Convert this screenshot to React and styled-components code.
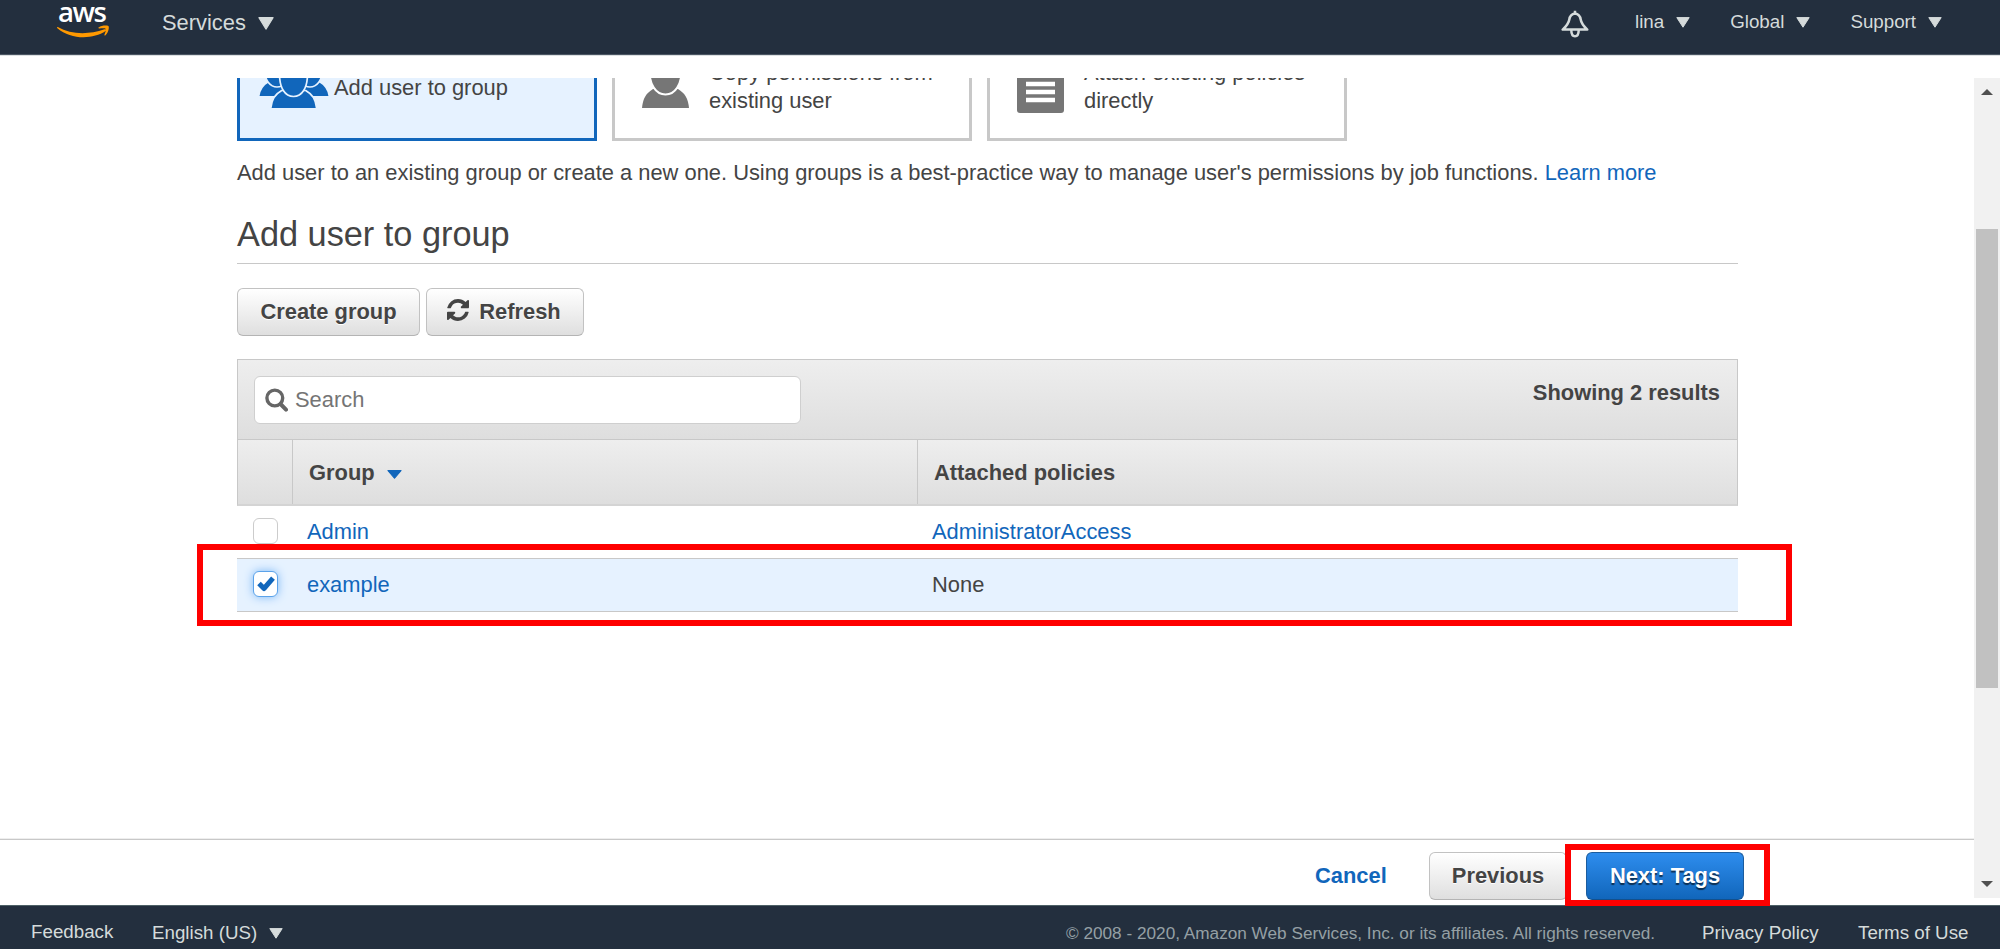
import React from "react";
import styled, { createGlobalStyle } from "styled-components";

const Global = createGlobalStyle`
  *, *::before, *::after { box-sizing: border-box; }
  body { margin: 0; background: #fff; color: #444; overflow: hidden;
    font: 21.88px/30px "Liberation Sans", Arial, sans-serif; }
  button, input { font: inherit; color: inherit; }
`;

const Page = styled.div`
  position: relative;
  width: 2000px;
  height: 949px;
  display: flex;
  flex-direction: column;
  overflow: hidden;
`;

const TopBar = styled.header`
  height: 55px;
  flex: none;
  display: flex;
  align-items: flex-start;
  background: #232f3e;
  color: #d5dbdb;
  border-bottom: 1px solid #4a5562;
  box-shadow: 0 1px 0 #dcdfe1;
`;

const Logo = styled.a`
  width: 54px;
  height: 40px;
  margin: 0 51px 0 57px;
  display: flex;
  flex-direction: column;
  svg { display: block; margin-top: -1px; }
`;

const LogoText = styled.span`
  padding-left: 1px;
  font: 600 27.5px/24px "Open Sans", "Noto Sans", sans-serif;
  letter-spacing: -1.4px;
  color: #fff;
`;

const MenuItem = styled.a`
  display: flex;
  align-items: center;
  gap: 12px;
  height: 30px;
  margin-top: ${(p) => p.$top || 7}px;
  margin-left: ${(p) => p.$left || 0}px;
  font-size: ${(p) => p.$size || 18.75}px;
  white-space: nowrap;
`;

const Spacer = styled.div`
  flex: 1;
`;

const BellBox = styled.div`
  width: 28px;
  height: 28px;
  margin: 10px 46px 0 0;
  svg { display: block; }
`;

const RightMenus = styled.nav`
  display: flex;
  width: 365px;
`;

const Body = styled.div`
  flex: 1;
  display: flex;
  padding-top: 23px;
  min-height: 0;
`;

const Column = styled.div`
  flex: 1;
  display: flex;
  flex-direction: column;
  min-width: 0;
`;

const ScrollArea = styled.main`
  height: 762px;
  overflow: hidden;
  padding: 0 236px 0 237px;
`;

const Cards = styled.div`
  display: flex;
  gap: 15px;
  height: 63px;
  align-items: flex-end;
`;

const Card = styled.div`
  width: 360px;
  height: 124px;
  flex: none;
  display: flex;
  align-items: flex-start;
  border: 3px solid ${(p) => (p.$active ? "#1166bb" : "#c8c8c8")};
  background: ${(p) => (p.$active ? "#e6f2ff" : "#fff")};
`;

const CardIcon = styled.div`
  flex: none;
  width: ${(p) => p.$width}px;
  padding-left: ${(p) => p.$left}px;
  padding-top: 42px;
  svg { display: block; }
`;

const CardText = styled.div`
  padding-top: ${(p) => p.$top}px;
  line-height: 28px;
  width: 240px;
`;

const Intro = styled.p`
  margin: 17px 0 0;
  white-space: nowrap;
`;

const Link = styled.a`
  color: #1166bb;
`;

const Title = styled.h2`
  margin: 16px 0 0;
  height: 60px;
  font-size: 34.3px;
  font-weight: 400;
  line-height: 60px;
  border-bottom: 1px solid #c8c8c8;
`;

const Actions = styled.div`
  display: flex;
  gap: 6px;
  margin-top: 24px;
`;

const Button = styled.button`
  height: 48px;
  width: ${(p) => p.$width}px;
  flex: none;
  display: flex;
  align-items: center;
  justify-content: center;
  gap: 10px;
  padding: 0;
  border: 1px solid ${(p) => (p.$primary ? "#1b5c9e" : "#c2c2c2")};
  border-bottom-color: ${(p) => (p.$primary ? "#12508e" : "#b4b4b4")};
  border-radius: 6px;
  background: ${(p) =>
    p.$primary ? "linear-gradient(#2e8dee, #1166bb)" : "linear-gradient(#fff, #dfdfdf)"};
  color: ${(p) => (p.$primary ? "#fff" : "#444")};
  font-weight: 700;
  text-shadow: ${(p) => (p.$primary ? "0 2px 1px rgba(0,0,0,.6)" : "0 1px 0 #fff")};
  svg { margin: 0 0 4px -2px; }
`;

const Table = styled.section`
  margin-top: 23px;
`;

const Tools = styled.div`
  height: 81px;
  display: flex;
  justify-content: space-between;
  padding: 16px 17px 0 16px;
  border: 1px solid #c8c8c8;
  background: linear-gradient(#eee, #dedede);
`;

const SearchBox = styled.label`
  display: flex;
  align-items: center;
  width: 547px;
  height: 48px;
  padding: 0 0 1px 10px;
  gap: 7px;
  background: #fff;
  border: 1px solid #cfcfcf;
  border-radius: 6px;
  input { border: 0; outline: 0; padding: 0; width: 440px; background: none; }
  input::placeholder { color: #757575; opacity: 1; }
`;

const Results = styled.strong`
  line-height: 34px;
`;

const HeadRow = styled.div`
  display: grid;
  grid-template-columns: 54px 625px 1fr;
  height: 66px;
  border: 1px solid #c8c8c8;
  border-top: 0;
  border-bottom: 2px solid #d4d4d4;
  background: linear-gradient(#eee, #dedede);
`;

const HeadCell = styled.div`
  display: flex;
  align-items: center;
  gap: 12px;
  padding: 2px 0 0 16px;
  font-weight: 700;
  border-left: ${(p) => (p.$line ? "1px solid #c8c8c8" : "0")};
  svg { margin-top: 3px; }
`;

const Row = styled.div`
  display: grid;
  grid-template-columns: 70px 625px 1fr;
  height: ${(p) => (p.$checked ? 54 : 52)}px;
  line-height: 52px;
  border: solid #c8c8c8;
  border-width: ${(p) => (p.$checked ? "1px 0" : "0")};
  background: ${(p) => (p.$checked ? "#e6f2ff" : "#fff")};
`;

const Check = styled.span`
  display: flex;
  align-items: center;
  justify-content: center;
  width: 25px;
  height: 26px;
  margin: 12px 0 0 16px;
  background: #fff;
  border: 1px solid ${(p) => (p.$on ? "#5ca3ea" : "#ccc")};
  border-radius: 6px;
  box-shadow: ${(p) => (p.$on ? "0 0 10px #7db8f5" : "none")};
`;

const WizardBar = styled.div`
  height: 66px;
  flex: none;
  display: flex;
  align-items: flex-start;
  padding: 12px 0 0 1315px;
  border-top: 1px solid #c8c8c8;
  box-shadow: 0 -1px 0 #eee;
`;

const Cancel = styled.a`
  width: 114px;
  line-height: 48px;
  font-weight: 700;
  color: #1166bb;
`;

const ButtonGap = styled.div`
  width: 19px;
`;

const ScrollBar = styled.aside`
  width: 26px;
  height: 820px;
  flex: none;
  display: flex;
  flex-direction: column;
  align-items: center;
  background: #f1f1f1;
  padding: 11px 0;
`;

const Thumb = styled.div`
  width: 22px;
  height: 459px;
  margin: 134px 0 auto;
  background: #c1c1c1;
`;

const Footer = styled.footer`
  height: 44px;
  flex: none;
  display: flex;
  background: #232f3e;
  border-top: 1px solid #4d6066;
  color: #d5dbdb;
  font-size: 18.75px;
  padding-left: 31px;
`;

const FootItem = styled.span`
  width: ${(p) => p.$width}px;
  margin-top: ${(p) => p.$top || 12}px;
  flex: none;
  display: flex;
  align-items: center;
  gap: 12px;
  height: 30px;
  white-space: nowrap;
  color: ${(p) => (p.$dim ? "#95a0a5" : "inherit")};
  font-size: ${(p) => (p.$dim ? "17.2px" : "inherit")};
`;

const Highlight = styled.div`
  position: absolute;
  left: ${(p) => p.$x}px;
  top: ${(p) => p.$y}px;
  width: ${(p) => p.$w}px;
  height: ${(p) => p.$h}px;
  border: 6px solid #f00;
  pointer-events: none;
`;

function Caret({ w = 14, h = 11, color = "#d5dbdb" }) {
  return (
    <svg width={w} height={h} viewBox="0 0 14 11" preserveAspectRatio="none">
      <path d="M.8.6h12.4L7 10.2z" fill={color} stroke={color} strokeLinejoin="round" />
    </svg>
  );
}

const Smile = () => (
  <svg width="54" height="17" viewBox="0 0 54 17" fill="#ff9900">
    <path d="M.8 4C14 11.500 31 12 47.500 6.300c1.700-.6 2.500.8 1.100 1.800C36 16.500 14 17 .4 5.200-.3 4.400.1 3.600.8 4z" />
    <path d="M41.600 4.600C44.500 2.400 49 2.200 51.400 3c1 .8.300 6-2.600 8.900-1 .9-1.700.5-1.300-.5.900-2.300 1.700-4.800 1.200-5.500-.7-.9-3.800-.6-6.300-.4-1 .1-1.500-.4-.8-.9z" />
  </svg>
);

const Bell = () => (
  <svg width="28" height="28" viewBox="0 0 28 28" fill="none" stroke="#d5dbdb" strokeWidth="2.500" strokeLinejoin="round">
    <path d="M14 3.400C10.500 3.800 8.800 6 8.300 9.500 7.800 13 5.500 16 1.700 19.600h24.600C22.500 16 20.200 13 19.700 9.500 19.200 6 17.500 3.800 14 3.400z" />
    <path d="M14 4V.8M10.300 20c0 8.300 7.400 8.300 7.400 0" />
  </svg>
);

const GroupIcon = () => (
  <svg width="70" height="46" viewBox="0 0 70 46">
    <g fill="#1166bb" stroke="#e6f2ff" strokeWidth="1.700">
      <path d="M-.5 34.800c1-8 5-12.500 10.500-15.500h50c5.500 3 9.500 7.500 10.500 15.500z" />
      <path d="M6 10c0 8 5 15 12 15S31 18 31 10zM38 10c0 8 6 15 13 15s12-7 12-15z" />
      <path d="M11.700 47c1-10 4-14.500 11-18.500h24c7 4 10 8.500 11 18.500z" />
      <path d="M20.500 12C20.500 4 26 0 34.500 0s14 4 14 12c0 14-5.500 22.500-14 22.500S20.500 26 20.500 12z" />
    </g>
  </svg>
);

const UserIcon = () => (
  <svg width="47" height="46" viewBox="0 0 47 46">
    <path d="M0 46c1-10 4-14.500 11-19h25c7 4.500 10 9 11 19z" fill="#767676" />
    <path d="M7.500 9C7.500 3 14 0 23.500 0s16 3 16 9c0 13-6 23.500-16 23.500S7.500 22 7.500 9z" fill="#767676" stroke="#fff" strokeWidth="2" />
  </svg>
);

const PolicyIcon = () => (
  <svg width="47" height="51" viewBox="0 0 47 51">
    <rect width="47" height="51" rx="3" fill="#767676" />
    <path d="M9 22h29M9 30h29M9 38h29" stroke="#fff" strokeWidth="4.500" />
  </svg>
);

const RefreshIcon = () => (
  <svg width="22" height="22" viewBox="0 0 1536 1536" fill="#444">
    <path d="M1511 928q0 5-1 7-64 268-268 434.500T764 1536q-146 0-282.500-55T238 1324l-129 129q-19 19-45 19t-45-19-19-45V960q0-26 19-45t45-19h448q26 0 45 19t19 45-19 45l-137 137q71 66 161 102t187 36q134 0 250-65t186-179q11-17 53-117 8-23 30-23h192q13 0 22.500 9.500t9.500 22.500zm25-800v448q0 26-19 45t-45 19h-448q-26 0-45-19t-19-45 19-45l138-138Q969 256 768 256q-134 0-250 65T332 500q-11 17-53 117-8 23-30 23H50q-13 0-22.500-9.500T18 608v-7q65-268 270-434.500T768 0q146 0 284 55.500T1297 212l130-129q19-19 45-19t45 19 19 45z" />
  </svg>
);

const SearchIcon = () => (
  <svg width="23" height="24" viewBox="0 0 23 24" fill="none" stroke="#666">
    <circle cx="9.800" cy="10" r="7.900" strokeWidth="3.400" />
    <path d="M15.500 16l5.500 5.600" strokeWidth="4" strokeLinecap="round" />
  </svg>
);

const Tick = () => (
  <svg width="20" height="18" viewBox="0 0 20 18">
    <path d="M3 8.500l5 5L17 3.200" fill="none" stroke="#1166bb" strokeWidth="5" strokeLinejoin="round" />
  </svg>
);

export default function App() {
  return (
    <>
      <Global />
      <Page>
        <TopBar>
          <Logo>
            <LogoText>aws</LogoText>
            <Smile />
          </Logo>
          <MenuItem $size={21.87} $top={8}>
            Services <Caret w={16} h={13} />
          </MenuItem>
          <Spacer />
          <BellBox><Bell /></BellBox>
          <RightMenus>
            <MenuItem>lina <Caret /></MenuItem>
            <MenuItem $left={40}>Global <Caret /></MenuItem>
            <MenuItem $left={40}>Support <Caret /></MenuItem>
          </RightMenus>
        </TopBar>

        <Body>
          <Column>
            <ScrollArea>
              <Cards>
                <Card $active>
                  <CardIcon $left={19} $width={94}><GroupIcon /></CardIcon>
                  <CardText $top={54}>Add user to group</CardText>
                </Card>
                <Card>
                  <CardIcon $left={27} $width={94}><UserIcon /></CardIcon>
                  <CardText $top={39}>Copy permissions from existing user</CardText>
                </Card>
                <Card>
                  <CardIcon $left={27} $width={94}><PolicyIcon /></CardIcon>
                  <CardText $top={39}>Attach existing policies directly</CardText>
                </Card>
              </Cards>
              <Intro>
                Add user to an existing group or create a new one. Using groups is a best-practice way to
                manage user's permissions by job functions. <Link>Learn more</Link>
              </Intro>
              <Title>Add user to group</Title>
              <Actions>
                <Button $width={183}>Create group</Button>
                <Button $width={158}><RefreshIcon />Refresh</Button>
              </Actions>
              <Table>
                <Tools>
                  <SearchBox>
                    <SearchIcon />
                    <input placeholder="Search" />
                  </SearchBox>
                  <Results>Showing 2 results</Results>
                </Tools>
                <HeadRow>
                  <HeadCell />
                  <HeadCell $line>Group <Caret w={15} h={9} color="#1166bb" /></HeadCell>
                  <HeadCell $line>Attached policies</HeadCell>
                </HeadRow>
                <Row>
                  <Check />
                  <Link>Admin</Link>
                  <Link>AdministratorAccess</Link>
                </Row>
                <Row $checked>
                  <Check $on><Tick /></Check>
                  <Link>example</Link>
                  <span>None</span>
                </Row>
              </Table>
            </ScrollArea>
            <WizardBar>
              <Cancel>Cancel</Cancel>
              <Button $width={138}>Previous</Button>
              <ButtonGap />
              <Button $primary $width={158}>Next: Tags</Button>
            </WizardBar>
          </Column>
          <ScrollBar>
            <svg width="12" height="6"><path d="M0 6L6 0l6 6z" fill="#505050" /></svg>
            <Thumb />
            <svg width="12" height="6"><path d="M0 0h12L6 6z" fill="#505050" /></svg>
          </ScrollBar>
        </Body>

        <Footer>
          <FootItem $width={121} $top={11}>Feedback</FootItem>
          <FootItem $width={914}>English (US) <Caret /></FootItem>
          <FootItem $width={636} $dim>
            © 2008 - 2020, Amazon Web Services, Inc. or its affiliates. All rights reserved.
          </FootItem>
          <FootItem $width={156}>Privacy Policy</FootItem>
          <FootItem $width={120}>Terms of Use</FootItem>
        </Footer>

        <Highlight $x={197} $y={544} $w={1595} $h={82} />
        <Highlight $x={1565} $y={844} $w={205} $h={62} />
      </Page>
    </>
  );
}
